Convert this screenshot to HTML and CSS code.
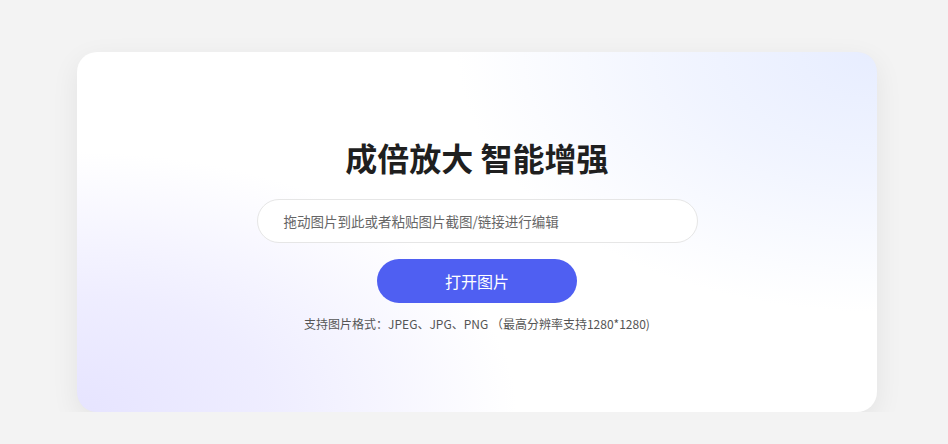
FILE: index.html
```html
<!DOCTYPE html>
<html lang="zh-CN">
<head>
<meta charset="utf-8">
<link rel="stylesheet" href="styles.css">
</head>
<body>
<div class="page">
  <div class="card">
    <h1 class="title">成倍放大 智能增强</h1>
    <div class="drop">拖动图片到此或者粘贴图片截图/链接进行编辑</div>
    <button class="open">打开图片</button>
    <p class="note">支持图片格式：JPEG、JPG、PNG （最高分辨率支持1280*1280)</p>
  </div>
</div>
</body>
</html>
```
FILE: styles.css
```css
html, body {
  margin: 0;
  padding: 0;
  background: #f3f3f3;
  font-family: "Noto Sans CJK SC", "Noto Sans", sans-serif;
}
.page {
  padding: 52px 0 0 77px;
}
.card {
  width: 800px;
  height: 360px;
  box-sizing: border-box;
  border-radius: 20px;
  background:
    radial-gradient(ellipse 420px 260px at 100% 0%, #e7edff 0%, rgba(231,237,255,0.6) 45%, rgba(255,255,255,0) 100%),
    radial-gradient(ellipse 440px 260px at 0% 100%, #e6e4ff 0%, rgba(230,228,255,0.65) 45%, rgba(255,255,255,0) 100%),
    #ffffff;
  box-shadow: 0 8px 28px rgba(0,0,0,0.07);
  display: flex;
  flex-direction: column;
  align-items: center;
  padding-top: 81px;
}
.title {
  margin: 0;
  font-size: 32px;
  line-height: 48px;
  font-weight: 700;
  color: #1f1f1f;
}
.drop {
  margin-top: 18px;
  width: 441px;
  height: 44px;
  box-sizing: border-box;
  border: 1px solid #e6e6e6;
  border-radius: 22px;
  background: #ffffff;
  padding-left: 26px;
  font-size: 13.5px;
  line-height: 42px;
  color: #666;
}
.open {
  margin-top: 16px;
  width: 200px;
  height: 44px;
  border: none;
  border-radius: 22px;
  background: #4f5ff2;
  color: #fff;
  font-family: inherit;
  font-size: 16px;
}
.note {
  margin: 12px 0 0;
  font-size: 12px;
  line-height: 18px;
  color: #555;
}
```
